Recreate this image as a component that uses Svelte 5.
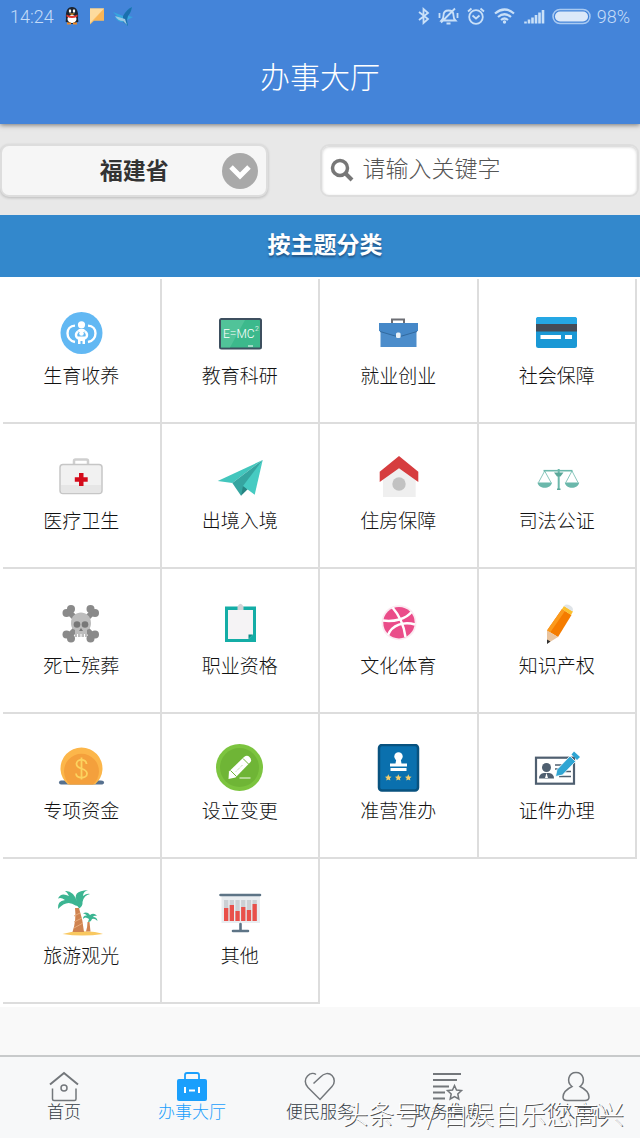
<script lang="ts">
	const topics = [
		{ name: "生育收养", icon: "family" },
		{ name: "教育科研", icon: "board" },
		{ name: "就业创业", icon: "briefcase" },
		{ name: "社会保障", icon: "card" },
		{ name: "医疗卫生", icon: "medkit" },
		{ name: "出境入境", icon: "plane" },
		{ name: "住房保障", icon: "house" },
		{ name: "司法公证", icon: "scales" },
		{ name: "死亡殡葬", icon: "skull" },
		{ name: "职业资格", icon: "clipboard" },
		{ name: "文化体育", icon: "ball" },
		{ name: "知识产权", icon: "pencil" },
		{ name: "专项资金", icon: "coin" },
		{ name: "设立变更", icon: "edit" },
		{ name: "准营准办", icon: "stamp" },
		{ name: "证件办理", icon: "idcard" },
		{ name: "旅游观光", icon: "palm" },
		{ name: "其他", icon: "chart" },
	];

	const tabs = [
		{ name: "首页", icon: "home" },
		{ name: "办事大厅", icon: "case" },
		{ name: "便民服务", icon: "heart" },
		{ name: "政务信息", icon: "news" },
		{ name: "个人中心", icon: "user" },
	];

	const bars = [19, 16, 22, 18, 21, 15];

	let activeTab = $state("case");
	let province = $state("福建省");
	let keyword = $state("");
</script>

{#snippet topicIcon(icon: string)}
	<svg class="topic-icon" viewBox="0 0 48 48" aria-hidden="true">
		{#if icon === "family"}
			<circle cx="24.5" cy="24" r="21" fill="#62b8f3" />
			<g fill="none" stroke="#fff" stroke-width="2.4">
				<path d="M18 16.6C8 17 8 31 18 33" />
				<path d="M31 16.6C41 17 41 31 31 33" />
				<path d="M21 22.5c-3 2-2.5 6 .6 7M28 22.5c3 2 2.5 6-.6 7" />
			</g>
			<circle cx="24.5" cy="15.8" r="3.6" fill="#fff" />
			<circle cx="24.5" cy="24.5" r="2.3" fill="#fff" />
			<path d="M20 22l2-2h5l2 2-2 1h-5z" fill="#fff" />
			<path d="M21 27.500h7v7.500h-2.500v-3h-2v3H21z" fill="#fff" />
		{:else if icon === "board"}
			<rect x="4" y="10" width="41" height="29.500" rx="1.500" fill="#3cb98c" stroke="#3d4f5f" stroke-width="2" />
			<path d="M5 11h24L14 38.500H5z" fill="#5fc9a2" opacity="0.6" />
			<text x="7" y="29" font-size="12" fill="#fff">E=MC</text>
			<text x="39" y="22" font-size="7" fill="#fff">2</text>
			<path d="M32 37h5" stroke="#fff" />
		{:else if icon === "briefcase"}
			<path d="M18 14v-3.500h12V14" fill="none" stroke="#6d6e74" stroke-width="2" />
			<path d="M6.500 20h36v18h-36z" fill="#4c8dcb" />
			<path d="M5 14h39v8l-19.500 6L5 22z" fill="#4588c8" />
			<path d="M6 22.500L24.500 28 43 22.500" fill="none" stroke="#326a9f" />
			<rect x="22" y="23.500" width="4.600" height="5.500" rx="1.500" fill="#e9f1f7" />
		{:else if icon === "card"}
			<rect x="3" y="8" width="41" height="31" rx="2.500" fill="#1a98d5" />
			<path d="M3 15v-4.500A2.500 2.500 0 0 1 5.500 8h36A2.500 2.500 0 0 1 44 10.500V15z" fill="#25a7e4" />
			<path d="M3 15h41v7.500H3z" fill="#454c57" />
			<path d="M7.500 26H28v4H7.500zM32 26h7v4h-7z" fill="#fff" />
		{:else if icon === "medkit"}
			<path d="M17 11V7q0-1.500 1.500-1.500h11Q31 5.500 31 7v4" fill="none" stroke="#cfcfcf" stroke-width="2.500" />
			<rect x="3" y="10.500" width="42" height="29" rx="3" fill="#f1f1f1" stroke="#c6c6c6" stroke-width="1.500" />
			<path d="M4 31h40v6q0 2-2 2H6q-2 0-2-2z" fill="#e6e6e6" />
			<path d="M22 19h4.500v4.200h4.200v4.500h-4.200V32H22v-4.300h-4.200v-4.500H22z" fill="#d40b1b" />
		{:else if icon === "plane"}
			<path d="M1.700 27L46.700 6 16.300 29z" fill="#43c6bd" />
			<path d="M46.700 6L16.300 29 25 41.700z" fill="#35a5a0" />
			<path d="M25 41.700l2-9.700 5 3z" fill="#278583" />
			<path d="M46.700 6L27 32l11.700 8.700z" fill="#46cbc2" />
		{:else if icon === "house"}
			<path d="M9 25L25 12l16.700 13v18H9z" fill="#efefef" />
			<path d="M25 2l19.300 15.700V28L25 14.300 5.700 28V17.700z" fill="#d63d3f" />
			<circle cx="25" cy="30" r="6.700" fill="#c2c2c2" />
		{:else if icon === "scales"}
			<g fill="none" stroke="#6bb8ab">
				<path d="M10.500 16.700h29" stroke-width="1.600" />
				<path d="M11.700 17L5.500 28.500M11.700 17L18 28.500M39 17l-6.200 11.500M39 17l6 11.500" stroke-width="0.800" />
				<path d="M25.700 15v20" stroke-width="2" />
			</g>
			<path d="M4.500 28.500H19c-1 7-13.500 7-14.500 0zM31.800 28.500h14.400c-1 7-13.400 7-14.400 0z" fill="#6bb8ab" />
			<path d="M21 18.500h9.500l-3 4h-3.500zM24 34.500h3.500V36H24z" fill="#5aa899" />
		{:else if icon === "skull"}
			<path d="M12 13l24 24M36 13L12 37" stroke="#8a8a8a" stroke-width="6" />
			<g fill="#8a8a8a">
				<circle cx="9.5" cy="14" r="4" />
				<circle cx="14" cy="10" r="4" />
				<circle cx="38" cy="14" r="4" />
				<circle cx="33.5" cy="10" r="4" />
				<circle cx="9.5" cy="35.5" r="4" />
				<circle cx="14" cy="39.5" r="4" />
				<circle cx="38" cy="35.5" r="4" />
				<circle cx="33.5" cy="39.5" r="4" />
			</g>
			<path d="M14 24c0-14 20-14 20 0 0 5-2 6-4 7v7H18v-7c-2-1-4-2-4-7z" fill="#bdbdbd" />
			<g fill="#787878">
				<circle cx="20" cy="25.500" r="3.300" />
				<circle cx="28" cy="25.500" r="3.300" />
				<path d="M24 29l2 3h-4z" />
			</g>
			<path d="M20.500 35v3M24 35v3M27.500 35v3" stroke="#fff" />
		{:else if icon === "clipboard"}
			<path d="M9 7.500h31v35.500H9z" fill="#14ada6" />
			<path d="M12 11h25v24.500L32.500 40H12z" fill="#f5f3f5" />
			<path d="M32.500 40v-4.500H37z" fill="#0b8d88" />
			<path d="M21.500 7.500Q24.500 2 27.500 7.500V11h-6z" fill="#d3d3d6" />
		{:else if icon === "ball"}
			<circle cx="25" cy="23.700" r="17.500" fill="#fbeaf1" />
			<circle cx="25" cy="23.700" r="15.700" fill="#ea4c89" />
			<g fill="none" stroke="#fff" stroke-width="2.500">
				<path d="M18.500 8.500C26 17 30 27 31.500 38" />
				<path d="M9 21.500C20 23 32 20 37.500 13" />
				<path d="M14 36C18 26 30 22 41 25.500" />
			</g>
		{:else if icon === "pencil"}
			<path d="M14 31.500L29 10l9.500 6L25 38z" fill="#f57c00" />
			<path d="M14 31.500L29 10l3 2-15 21.800z" fill="#fb9a1d" />
			<path d="M29 10l2-3 9 5.500-2 3.500z" fill="#fbc02d" />
			<path d="M31 7q2-2.500 6-.5t2.500 6z" fill="#dfe4e8" />
			<path d="M14 31.500L25 38l-6.500 4L14 44.500z" fill="#e9c49f" />
			<path d="M14 40.500l3.500 2L14 45z" fill="#333" />
		{:else if icon === "coin"}
			<path d="M4 36.500h40q3 0 3 2t-3 2H4q-2 0-2-2t2-2z" fill="#56708e" />
			<path d="M11 40.500a21 21 0 1 1 27 0z" fill="#fcb64a" />
			<path d="M13 40.500a17.500 17.500 0 1 1 23 0z" fill="#f4a03c" />
			<g fill="none" stroke="#fcd35f" stroke-width="1.800">
				<path d="M29.500 20c-.5-5.500-10-5.500-10 0 0 6 10.500 3.500 10.500 9.500 0 5.500-10.500 5.500-11 0" />
				<path d="M24.500 13.500v22" />
			</g>
		{:else if icon === "edit"}
			<circle cx="23.500" cy="23.500" r="23.500" fill="#7cc43f" />
			<circle cx="23.500" cy="23.500" r="19.500" fill="#6fb536" />
			<path d="M13 27.500L28 13q3-2.500 5.500 0t1 5L19.500 33.500 12.500 35z" fill="#fff" />
			<path d="M14.500 26.500l6 6M27 14.500l6 6" stroke="#6fb536" />
			<path d="M20 27.500l7-7" stroke="#a6cf86" stroke-dasharray="1 1" />
			<path d="M23.500 34h11" stroke="#dff0d0" stroke-width="1.200" />
		{:else if icon === "stamp"}
			<rect x="5" y="1" width="39" height="45.500" rx="3" fill="#0a70ae" stroke="#08527f" stroke-width="2.500" />
			<circle cx="24.500" cy="12.500" r="4.200" fill="#fff" />
			<path d="M22.500 14h4l1 5.500h5.500v3H16v-3h5.500zM16.500 24h16v3h-16z" fill="#fff" />
			<g fill="#f3cd6b">
				{#each [14, 24, 34] as x}
					<path transform="translate({x} 33.500)" d="M.3-3.200l1 2.100 2.300.3-1.700 1.600.4 2.300L.3 2l-2 1.100.4-2.300L-3-.8l2.300-.3z" />
				{/each}
			</g>
		{:else if icon === "idcard"}
			<rect x="3" y="13.700" width="38" height="26" fill="#fff" stroke="#4f5f70" stroke-width="2.200" />
			<circle cx="13.500" cy="23.500" r="4.500" fill="#4f5f70" />
			<path d="M6 34.500q0-5 5-5.500h5q5 .5 5 5.500z" fill="#4f5f70" />
			<path d="M13.500 29l1.500 5h-3z" fill="#fff" />
			<path d="M22 21h8M22 25h5M30 27.500h8M26 32.500h12" stroke="#4f5f70" stroke-width="1.500" />
			<path d="M22.500 32.500l1.500-7L37 12l5.500 5.500-13 13.500z" fill="#2fa5d3" stroke="#fff" stroke-width="0.800" />
			<path d="M38.500 10.500l2.500-3 6 5.500-3 3z" fill="#2fa5d3" />
		{:else if icon === "palm"}
			<path d="M5.500 45q9-3 20-2.800Q40 42.500 46 45 25 48 5.500 45z" fill="#f9c860" />
			<path d="M18 19h4q4 12 5 24H15.500Q19.500 31 18 19z" fill="#cf8350" />
			<path d="M17 27l6-3M17 33l8-4M17 39l9-5" stroke="#e8ab7b" />
			<path d="M30.500 33h2q.5 5 1 9.500H29q1.500-5 1.500-9.500z" fill="#cf8350" />
			<g fill="#3cb592">
				<path d="M20.500 13Q14 2 31 1q-5 1.500-5 6 4-3 7-2-6 1-7.500 8 .5 4-3.500 6.500-1-3-3.500-3Q10 10 1 20 0 12 8 11 4 8 1 9.500 4 3 12 7 10 3 8 2q8-1 12.500 11z" />
				<path d="M32 30q-4-3-6 0 0-4 4-3.500-2-2-4-2 4-2.500 7 1.500 4-3 7 1-3-1-4 1 4 0 4.500 4-3-3-5.500-2-1 3-4 3z" />
			</g>
		{:else if icon === "chart"}
			<path d="M5.500 7h38.500v27H5.500z" fill="#e9edf0" />
			{#each bars as top, i}
				<path d="M{8 + i * 5.7} 11h4.300v21h-4.300z" fill="#cbd0d4" />
				<path d="M{8 + i * 5.7} {top}h4.300V32h-4.300z" fill="#e9504a" />
			{/each}
			<path d="M4.500 6h39.500M24.500 35v7M17 42h15" stroke="#5d7486" stroke-width="2.600" stroke-linecap="round" />
		{/if}
	</svg>
{/snippet}

{#snippet tabIcon(icon: string)}
	<svg class="tab-icon" viewBox="0 0 32 32" aria-hidden="true">
		{#if icon === "home"}
			<path d="M2 13.500L16 2l14 11.500" stroke-width="2" />
			<path d="M4.500 17.500v10.500q0 1.500 1.500 1.500h20.500q1.500 0 1.500-1.500V17.500" />
			<circle cx="16" cy="17" r="3" />
		{:else if icon === "case"}
			<rect x="1" y="8" width="30" height="22" rx="2" fill="currentColor" stroke="none" />
			<path d="M9 8V4q0-2 2-2h10q2 0 2 2v4" stroke-width="1.800" />
			<path d="M9 16v6M23 16v6M13 19.500h6" stroke="#fff" stroke-width="2" />
		{:else if icon === "heart"}
			<path d="M9.500 12.500L16.500 6C20 2 25 1.500 28 4.500s3 8 0 11L16 28.500 4 16.500C.5 13 .5 8 3.500 5S10 2 12 3.500" />
		{:else if icon === "news"}
			<path d="M1 3h28M1 9h24M1 15.500h16M1 21.500h12M1 27.500h12" stroke-width="2" />
			<path d="M22.500 14.500l2 4.500 5 .5-3.700 3.500 1 5-4.300-2.500-4.300 2.500 1-5-3.700-3.500 5-.5z" />
		{:else if icon === "user"}
			<path d="M12 15.500C6 11 8.500 1.500 16 1.500S26 11 20 15.500c4 2 9 5 9 10.500 0 2.500-1.500 3.500-4 3.500H7c-2.500 0-4-1-4-3.500 0-5.500 5-8.500 9-10.500z" />
		{/if}
	</svg>
{/snippet}

<div class="page">
	<header>
		<div class="status">
			<span>14:24</span>
			<svg class="notice" viewBox="0 0 72 20" aria-hidden="true">
				<path d="M3 13Q2 1 9 1t6 12q1 4-1 3-5 4-10 0-2 1-1-3z" fill="#1c2430" />
				<ellipse cx="9" cy="13" rx="4.5" ry="4" fill="#fff" />
				<ellipse cx="7" cy="5" rx="1.200" ry="1.700" fill="#fff" />
				<ellipse cx="11" cy="5" rx="1.200" ry="1.700" fill="#fff" />
				<path d="M6 7.500h6l-3 1.500z" fill="#f6a623" />
				<path d="M3.500 8.500q5.500 3 11 0v2q-5.500 3-11 0z" fill="#e2362d" />
				<path d="M4 17.500h4M10 17.500h4" stroke="#f08a24" stroke-width="2" />
				<path d="M27 2.500h14v12H31l-4 4z" fill="#fbc46e" />
				<path d="M41 2.500v12H31l-4 4z" fill="#f9b556" />
				<path d="M27 2.500h14L27 17z" fill="#fddb9e" />
				<path d="M50 6l10 4q4-7 9-9-1 6-4 9l5 1-6 3 1 6-5-4q-6 0-8-5l3 0z" fill="#35a7de" />
				<path d="M60 10q4-7 9-9-1 6-4 9l-1 4 1 6-5-4z" fill="#1b6fae" />
				<path d="M52 10q3 5 8 5l4 4-2-6z" fill="#9cc9e2" />
			</svg>
			<svg class="system" viewBox="0 0 176 20" aria-hidden="true">
				<g fill="none" stroke="#c9e0f8" stroke-width="1.800">
					<path d="M2 6l9 7-4.500 4V3L11 7l-9 7" />
					<path d="M24.500 14.500q2-2 2-5 0-5 5-5t5 5q0 3 2 5zM24 16.500L38 2.500M29.500 17.500h4M22.500 7v5M40.500 7v5" />
					<circle cx="59" cy="11" r="6.800" />
					<path d="M55.500 9.500l3.500 3 3.500-3M51 5.500L54.500 2.500M67 5.500L63.500 2.500" />
					<path d="M78 7.500q9.500-8 19 0M81 11q6.500-5.500 13 0M84 14q3.500-3 7 0" stroke-width="2.200" />
				</g>
				<circle cx="87.500" cy="16" r="1.700" fill="#c9e0f8" />
				<path d="M108.500 17.500v-2M112 17.500v-4M115.500 17.500v-6M119 17.500V9M122.500 17.500V6.500M126 17.500V4" stroke="#c9e0f8" stroke-width="2.600" />
				<rect x="136" y="3.500" width="37" height="14" rx="7" fill="none" stroke="#a9caf2" stroke-width="1.500" />
				<rect x="138" y="5.500" width="33" height="10" rx="5" fill="#dce9f9" />
			</svg>
			<span>98%</span>
		</div>
		<h1>办事大厅</h1>
	</header>

	<div class="filters">
		<div class="province">
			<select bind:value={province} aria-label="省份">
				<option>福建省</option>
			</select>
			<svg viewBox="0 0 36 36" aria-hidden="true">
				<circle cx="18" cy="18" r="18" fill="#a9a9a9" />
				<path d="M9 14l9 9 9-9" fill="none" stroke="#fff" stroke-width="5" />
			</svg>
		</div>
		<label class="search">
			<svg viewBox="0 0 24 24" aria-label="搜索">
				<circle cx="10" cy="10" r="7.500" fill="none" stroke="#777" stroke-width="3.500" />
				<path d="M15 15l7 7" stroke="#777" stroke-width="4" />
			</svg>
			<input type="text" bind:value={keyword} placeholder="请输入关键字" />
		</label>
	</div>

	<main>
		<h2>按主题分类</h2>
		<ul class="topics">
			{#each topics as topic}
				<li>
					<a href="#{topic.icon}">
						{@render topicIcon(topic.icon)}
						<span>{topic.name}</span>
					</a>
				</li>
			{/each}
		</ul>
	</main>

	<nav>
		{#each tabs as tab}
			<button
				class={["tab", activeTab === tab.icon ? "active" : ""]}
				onclick={() => (activeTab = tab.icon)}
			>
				{@render tabIcon(tab.icon)}
				<span>{tab.name}</span>
			</button>
		{/each}
		<p class="watermark">头条号 / 自娱自乐您高兴</p>
	</nav>
</div>

<style>
	:global(body) {
		margin: 0;
		background-color: #f9f9f9;
	}

	.page {
		display: flex;
		flex-direction: column;
		min-height: 100vh;
		font-family: "Noto Sans CJK SC", sans-serif;
		font-weight: 300;
		color: #222;
	}

	h1,
	h2,
	p,
	ul {
		margin: 0;
		padding: 0;
		font-weight: inherit;
	}

	header {
		position: relative;
		height: 124px;
		background-color: #4484d9;
		box-shadow: 0 1px 5px rgba(0, 0, 0, 0.5);
		color: #fff;
	}
	.status {
		display: flex;
		align-items: center;
		height: 32px;
		padding: 0 10px;
		font-family: Roboto, sans-serif;
		font-size: 18px;
		color: #c5dcf8;
	}
	.notice {
		width: 72px;
		height: 20px;
		margin: 0 auto 0 9px;
	}
	.system {
		width: 176px;
		height: 20px;
		margin-right: 4px;
	}
	h1 {
		font-size: 30px;
		line-height: 86px;
		text-align: center;
	}

	.filters {
		display: flex;
		gap: 52px;
		padding: 20px 1px 18px 0;
		background-color: #e8e8e8;
	}
	.province,
	.search {
		box-sizing: border-box;
		height: 53px;
		border: 2px solid #ddd;
		border-radius: 9px;
	}
	.province {
		position: relative;
		width: 42%;
		background-color: #f6f6f6;
		box-shadow: 0 1px 3px rgba(0, 0, 0, 0.2);
	}
	.province select {
		width: 100%;
		height: 46px;
		padding: 0;
		border: none;
		background: none;
		appearance: none;
		font-family: inherit;
		font-size: 23px;
		font-weight: 700;
		color: #333;
		text-align: center;
		text-align-last: center;
	}
	.province svg {
		position: absolute;
		top: 7px;
		right: 8px;
		width: 36px;
		height: 36px;
		pointer-events: none;
	}
	.search {
		display: flex;
		flex: 1;
		gap: 8px;
		padding: 0 8px;
		background-color: #fff;
		box-shadow: inset 0 1px 3px rgba(0, 0, 0, 0.2);
	}
	.search svg {
		flex: none;
		width: 24px;
		height: 24px;
		margin-top: 12px;
	}
	.search input {
		flex: 1;
		min-width: 0;
		height: 42px;
		padding: 0;
		border: none;
		outline: none;
		background: none;
		font-family: inherit;
		font-size: 23px;
		font-weight: inherit;
	}
	.search input::placeholder {
		color: #555;
	}

	main {
		padding-bottom: 3px;
		background-color: #fff;
	}
	h2 {
		height: 62px;
		padding-left: 10px;
		background-color: #3388cc;
		font-size: 23px;
		font-weight: 700;
		line-height: 56px;
		text-align: center;
		color: #fff;
		text-shadow: 0 2px 2px #225588;
	}
	.topics {
		display: grid;
		grid-template-columns: repeat(4, 1fr);
		grid-auto-rows: 145px;
		padding: 2px 3px 0;
		list-style: none;
	}
	.topics li {
		border-right: 2px solid #ddd;
		border-bottom: 2px solid #ddd;
	}
	.topics a {
		display: flex;
		flex-direction: column;
		align-items: center;
		gap: 4px;
		padding-top: 30px;
		font-size: 19px;
		line-height: 28px;
		text-decoration: none;
		color: #111;
	}
	.topic-icon {
		width: 48px;
		height: 48px;
		font-family: Roboto, sans-serif;
	}

	nav {
		position: relative;
		display: flex;
		height: 81px;
		margin-top: auto;
		border-top: 2px solid #c8cacb;
		background-color: #f7f8f9;
	}
	.tab {
		display: flex;
		flex: 1;
		flex-direction: column;
		align-items: center;
		padding: 14px 0 0;
		border: none;
		background: none;
		font-family: inherit;
		font-size: 17px;
		font-weight: inherit;
		line-height: 16px;
		color: #333b44;
		cursor: pointer;
	}
	.tab.active {
		color: #1a9ffc;
	}
	.tab-icon {
		width: 32px;
		height: 32px;
		fill: none;
		stroke: #73777b;
		stroke-width: 1.5;
	}
	.active .tab-icon {
		stroke: currentColor;
	}
	.watermark {
		position: absolute;
		right: 16px;
		bottom: 7px;
		font-size: 26px;
		line-height: 36px;
		white-space: nowrap;
		color: #fff;
		text-shadow: 1px 1px 0 #555;
		pointer-events: none;
	}
</style>
